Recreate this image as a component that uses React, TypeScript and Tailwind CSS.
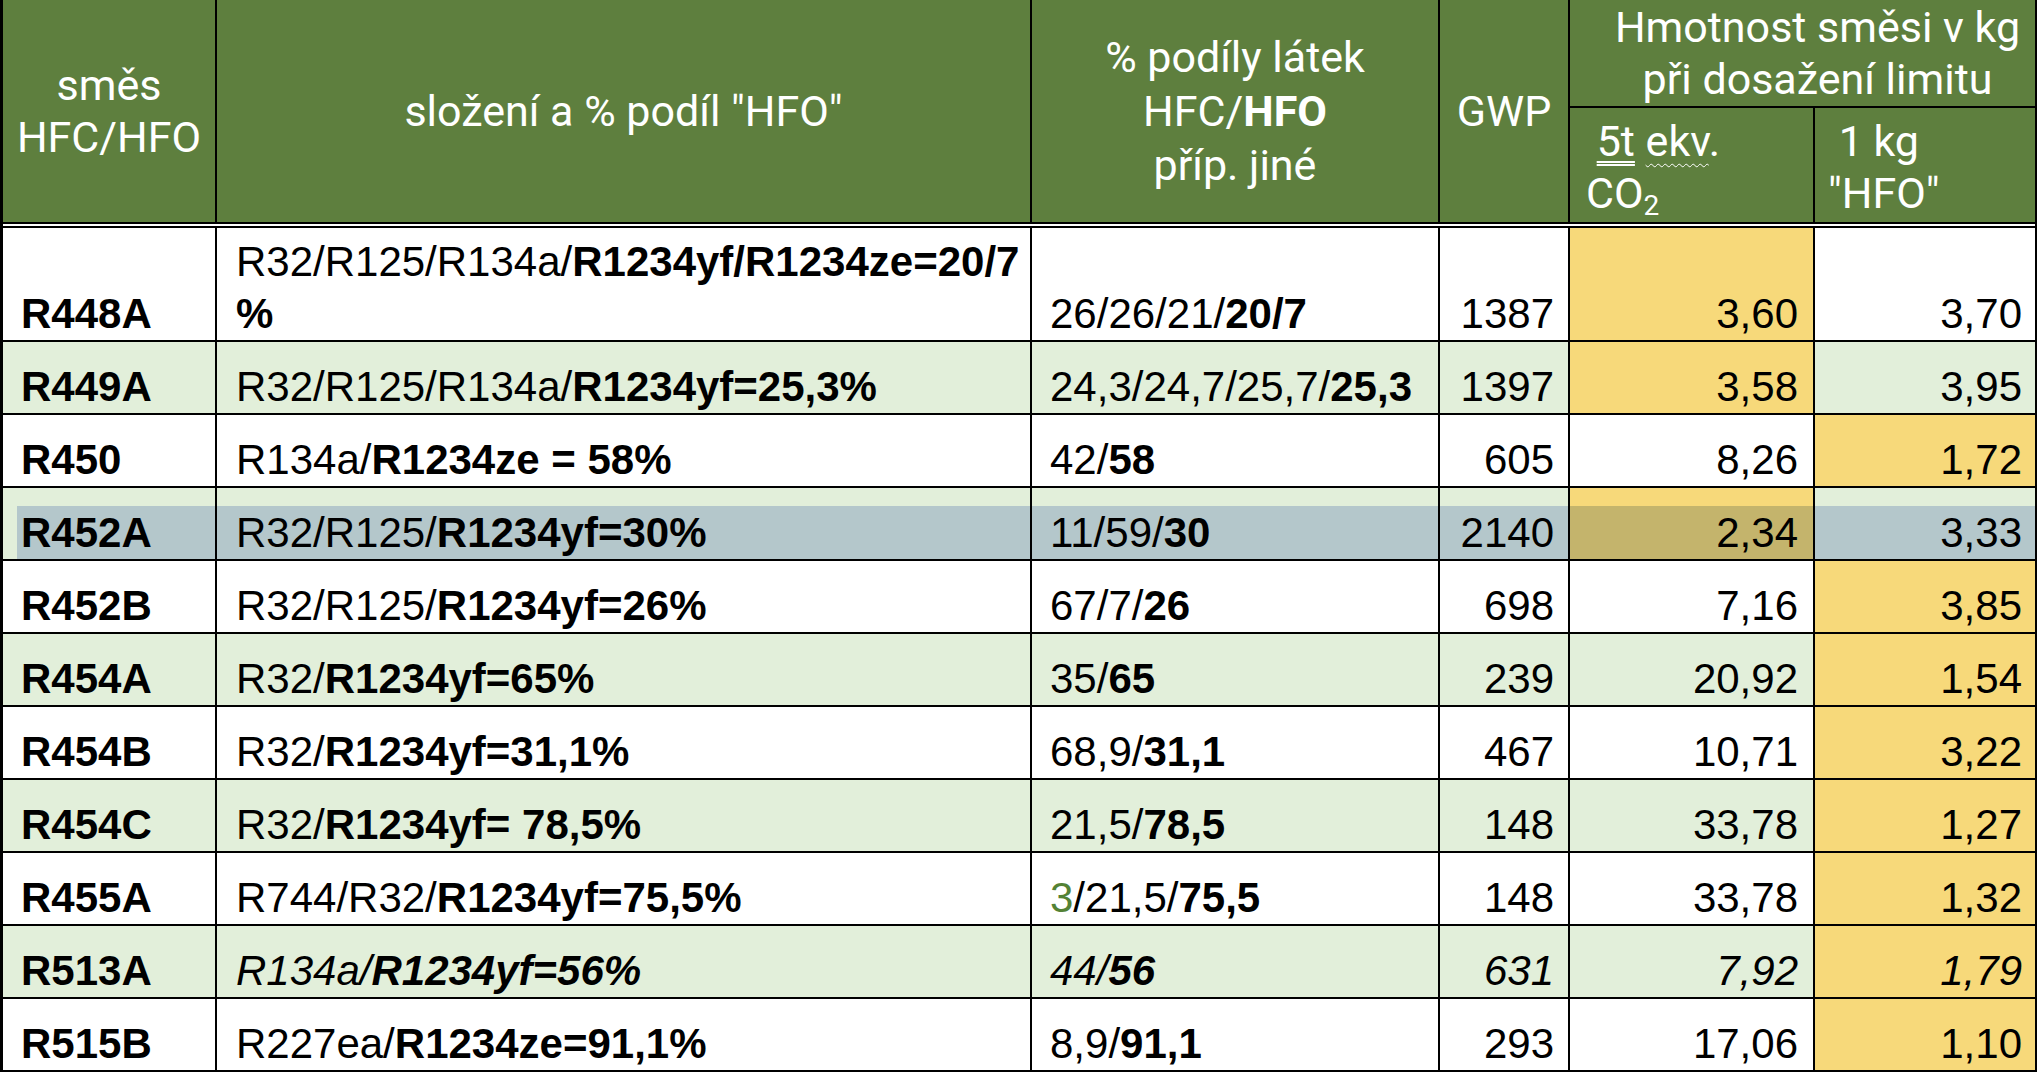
import React from 'react';

type Row = {
  name: string;
  comp: React.ReactNode;
  pct: React.ReactNode;
  gwp: string;
  t5: string;
  kg1: string;
  green: boolean; // light green row stripe
  y5?: boolean; // yellow cell in "5t ekv." column
  y1?: boolean; // yellow cell in "1 kg" column
  italic?: boolean;
  tall?: boolean;
  selected?: boolean;
};

const rows: Row[] = [
  {
    name: 'R448A',
    comp: (
      <>
        R32/R125/R134a/<b>R1234yf/R1234ze=20/7</b>
        <br />
        <b>%</b>
      </>
    ),
    pct: <>26/26/21/<b>20/7</b></>,
    gwp: '1387', t5: '3,60', kg1: '3,70', green: false, y5: true, tall: true,
  },
  {
    name: 'R449A',
    comp: <>R32/R125/R134a/<b>R1234yf=25,3%</b></>,
    pct: <>24,3/24,7/25,7/<b>25,3</b></>,
    gwp: '1397', t5: '3,58', kg1: '3,95', green: true, y5: true,
  },
  {
    name: 'R450',
    comp: <>R134a/<b>R1234ze = 58%</b></>,
    pct: <>42/<b>58</b></>,
    gwp: '605', t5: '8,26', kg1: '1,72', green: false, y1: true,
  },
  {
    name: 'R452A',
    comp: <>R32/R125/<b>R1234yf=30%</b></>,
    pct: <>11/59/<b>30</b></>,
    gwp: '2140', t5: '2,34', kg1: '3,33', green: true, y5: true, selected: true,
  },
  {
    name: 'R452B',
    comp: <>R32/R125/<b>R1234yf=26%</b></>,
    pct: <>67/7/<b>26</b></>,
    gwp: '698', t5: '7,16', kg1: '3,85', green: false, y1: true,
  },
  {
    name: 'R454A',
    comp: <>R32/<b>R1234yf=65%</b></>,
    pct: <>35/<b>65</b></>,
    gwp: '239', t5: '20,92', kg1: '1,54', green: true, y1: true,
  },
  {
    name: 'R454B',
    comp: <>R32/<b>R1234yf=31,1%</b></>,
    pct: <>68,9/<b>31,1</b></>,
    gwp: '467', t5: '10,71', kg1: '3,22', green: false, y1: true,
  },
  {
    name: 'R454C',
    comp: <>R32/<b>R1234yf= 78,5%</b></>,
    pct: <>21,5/<b>78,5</b></>,
    gwp: '148', t5: '33,78', kg1: '1,27', green: true, y1: true,
  },
  {
    name: 'R455A',
    comp: <>R744/R32/<b>R1234yf=75,5%</b></>,
    pct: <><span className="text-[#548235]">3</span>/21,5/<b>75,5</b></>,
    gwp: '148', t5: '33,78', kg1: '1,32', green: false, y1: true,
  },
  {
    name: 'R513A',
    comp: <>R134a/<b>R1234yf=56%</b></>,
    pct: <>44/<b>56</b></>,
    gwp: '631', t5: '7,92', kg1: '1,79', green: true, y1: true, italic: true,
  },
  {
    name: 'R515B',
    comp: <>R227ea/<b>R1234ze=91,1%</b></>,
    pct: <>8,9/<b>91,1</b></>,
    gwp: '293', t5: '17,06', kg1: '1,10', green: false, y1: true,
  },
];

const GRID = 'grid grid-cols-[212px_813px_406px_128px_243px_220px] gap-[2px]';
const HEAD = 'bg-[#5e7f3e] text-white';

function BodyRow({ r }: { r: Row }) {
  const h = r.tall ? 'h-[112px]' : 'h-[71px]';
  const base = r.green ? 'bg-[#e2efda]' : 'bg-white';
  const it = r.italic ? 'italic' : '';
  const cell = `${h} flex items-end leading-[52px] whitespace-nowrap ${it}`;

  if (r.selected) {
    // selection tint over the row, the top strip keeps the stripe colour
    const sel = 'bg-[linear-gradient(#e2efda_18px,#b4c7cb_18px)]';
    return (
      <>
        <div className={`${h} bg-[#e2efda] pl-[14px] pt-[18px]`}>
          <div className="h-full bg-[#b4c7cb] flex items-end pl-[4px] leading-[52px] font-bold">{r.name}</div>
        </div>
        <div className={`${cell} ${sel} pl-[19px]`}>{r.comp}</div>
        <div className={`${cell} ${sel} pl-[18px]`}>{r.pct}</div>
        <div className={`${cell} ${sel} justify-end pr-[14px]`}>{r.gwp}</div>
        <div className={`${cell} bg-[linear-gradient(#f7d97a_18px,#c4b46c_18px)] justify-end pr-[15px]`}>{r.t5}</div>
        <div className={`${cell} ${sel} justify-end pr-[13px]`}>{r.kg1}</div>
      </>
    );
  }

  return (
    <>
      <div className={`${h} ${base} flex items-end pl-[18px] leading-[52px] font-bold`}>{r.name}</div>
      <div className={`${cell} ${base} pl-[19px]`}>
        <div>{r.comp}</div>
      </div>
      <div className={`${cell} ${base} pl-[18px]`}>{r.pct}</div>
      <div className={`${cell} ${base} justify-end pr-[14px]`}>{r.gwp}</div>
      <div className={`${cell} ${r.y5 ? 'bg-[#f7d97a]' : base} justify-end pr-[15px]`}>{r.t5}</div>
      <div className={`${cell} ${r.y1 ? 'bg-[#f7d97a]' : base} justify-end pr-[13px]`}>{r.kg1}</div>
    </>
  );
}

export default function App() {
  return (
    <div className="w-[2042px] h-[1078px] bg-white overflow-hidden">
      <div className="w-[2037px] bg-black pl-[3px] pr-[2px]">
        {/* header */}
        <div className={`${GRID} grid-rows-[106px_114px] pb-[2px] font-['Roboto',sans-serif] text-[43px] leading-[52px]`}>
          <div className={`${HEAD} row-span-2 flex items-center justify-center text-center`}>
            směs
            <br />
            HFC/HFO
          </div>
          <div className={`${HEAD} row-span-2 flex items-center justify-center text-center`}>
            složení a % podíl "HFO"
          </div>
          <div className={`${HEAD} row-span-2 flex items-center justify-center text-center leading-[54px]`}>
            <div>
              % podíly látek
              <br />
              HFC/<b>HFO</b>
              <br />
              příp. jiné
            </div>
          </div>
          <div className={`${HEAD} row-span-2 flex items-center justify-center`}>GWP</div>
          <div className={`${HEAD} col-span-2 flex items-center justify-center text-center pl-[30px]`}>
            <div>
              Hmotnost směsi v kg
              <br />
              při dosažení limitu
            </div>
          </div>
          <div className={`${HEAD} flex items-center pl-[16px] pt-[4px]`}>
            <div className="whitespace-pre">
              {' '}
              <span className="underline decoration-double decoration-[2px] underline-offset-[5px]">5t</span>{' '}
              <span className="underline decoration-wavy decoration-[1px] underline-offset-[7px]">ekv</span>.
              <br />
              CO<sub className="text-[28px]">2</sub>
            </div>
          </div>
          <div className={`${HEAD} flex items-center pl-[13px] pt-[4px]`}>
            <div className="whitespace-pre">
              {' 1 kg'}
              <br />
              "HFO"
            </div>
          </div>
        </div>

        {/* double rule under the header */}
        <div className="h-[2px] bg-white" />

        {/* body */}
        <div className={`${GRID} py-[2px] font-['Liberation_Sans',Arial,sans-serif] text-[42px] text-black`}>
          {rows.map((r) => (
            <BodyRow key={r.name} r={r} />
          ))}
        </div>
      </div>
    </div>
  );
}
